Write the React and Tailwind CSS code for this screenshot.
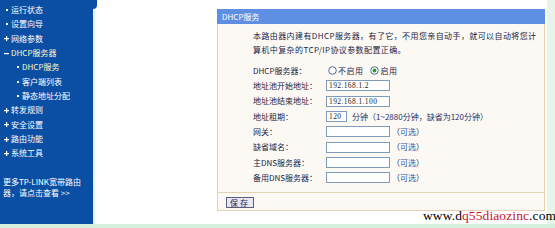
import React from "react";

const Dot = () => (
  <span className="w-[5px] flex items-center justify-center">
    <span className="w-[2px] h-[2px] bg-white" />
  </span>
);
const Plus = () => (
  <svg width="5" height="5" viewBox="0 0 5 5" className="shrink-0">
    <rect x="0" y="2" width="5" height="1.2" fill="#fff" />
    <rect x="2" y="0" width="1.2" height="5" fill="#fff" />
  </svg>
);
const Minus = () => (
  <svg width="5" height="5" viewBox="0 0 5 5" className="shrink-0">
    <rect x="0" y="2" width="5" height="1.2" fill="#fff" />
  </svg>
);

const NavItem = ({ icon, label, sub, hl }) => (
  <div className={`h-[14.33px] flex items-center ${sub ? "pl-[15px]" : "pl-[4px]"}`}>
    {icon}
    <span className={`ml-[2px] text-[8px] leading-none ${hl ? "text-[#fff8c8]" : "text-white"}`}>{label}</span>
  </div>
);

const Radio = ({ on }) => (
  <svg width="9" height="9" viewBox="0 0 9 9" className="shrink-0">
    <circle cx="4.5" cy="4.5" r="3.8" fill="#fff" stroke="#3a5f8c" strokeWidth="0.9" />
    {on && <circle cx="4.5" cy="4.5" r="1.9" fill="#2a9a2a" />}
  </svg>
);

const Box = ({ w = "w-[64px]", v }) => (
  <div className={`${w} h-[11px] border border-[#7f9db9] bg-white text-[7.5px] leading-[9px] pl-[2px] tracking-[0.4px] text-[#222] font-['Liberation_Serif',serif]`}>
    {v}
  </div>
);

const Row = ({ label, children }) => (
  <div className="h-[15.33px] flex items-center">
    <div className="w-[73px] text-[8px] leading-none">{label}</div>
    <div className="flex items-center">{children}</div>
  </div>
);

const Opt = () => (
  <span className="ml-[2px] text-[8px] leading-none text-[#1c2a50]">
    （<span className="text-[#2a56a8]">可选</span>）
  </span>
);

export default function App() {
  return (
    <div className="w-[555px] h-[228px] bg-white flex flex-col overflow-hidden relative font-['Noto_Sans_CJK_SC',sans-serif]">
      <div className="flex h-[224px]">
        <div className="w-[93px] bg-[#0b4fa5] relative pt-[3px]">
          <div className="absolute -right-[4px] top-0 w-[4px] h-[9px] bg-[#0b4fa5] rounded-br-full" />
          <NavItem icon={<Dot />} label="运行状态" />
          <NavItem icon={<Dot />} label="设置向导" />
          <NavItem icon={<Plus />} label="网络参数" />
          <NavItem icon={<Minus />} label="DHCP服务器" hl />
          <NavItem icon={<Dot />} label="DHCP服务" sub hl />
          <NavItem icon={<Dot />} label="客户端列表" sub />
          <NavItem icon={<Dot />} label="静态地址分配" sub />
          <NavItem icon={<Plus />} label="转发规则" />
          <NavItem icon={<Plus />} label="安全设置" />
          <NavItem icon={<Plus />} label="路由功能" />
          <NavItem icon={<Plus />} label="系统工具" />
          <div className="mt-[15px] pl-[3px] text-white text-[8px] leading-[11.7px]">
            <div>更多TP-LINK宽带路由</div>
            <div>器，请点击查看 &gt;&gt;</div>
          </div>
        </div>
        <div className="w-[2px] bg-[#e2f5f3]" />
        <div className="flex-1 flex">
          <div className="flex-1 pl-[122px] pt-[9px]">
            <div className="w-[328px] text-[#1a2444]">
              <div className="h-[15px] bg-[#5f8fe2] text-white text-[8px] leading-[15px] pl-[5px]">DHCP服务</div>
              <div className="h-[187px] border-x border-b border-[#e4d2b2] bg-[#fcf9f4] flex flex-col">
                <div className="pl-[35px] pt-[5px]">
                  <div className="text-[8px] leading-[14px] tracking-[0.4px]">本路由器内建有DHCP服务器，有了它，不用您亲自动手，就可以自动将您计</div>
                  <div className="text-[8px] leading-[14px] tracking-[0.4px]">算机中复杂的TCP/IP协议参数配置正确。</div>
                  <div className="mt-[6px]">
                    <Row label="DHCP服务器：">
                      <span className="ml-[2px]"><Radio /></span>
                      <span className="ml-[1px] text-[8px] leading-none tracking-[0.5px]">不启用</span>
                      <span className="ml-[6px]"><Radio on /></span>
                      <span className="ml-[2px] text-[8px] leading-none tracking-[0.5px]">启用</span>
                    </Row>
                    <Row label="地址池开始地址："><Box v="192.168.1.2" /></Row>
                    <Row label="地址池结束地址："><Box v="192.168.1.100" /></Row>
                    <Row label="地址租期：">
                      <Box w="w-[21px]" v="120" />
                      <span className="ml-[5px] text-[8px] leading-none text-[#22336a]">分钟（1~2880分钟，缺省为120分钟）</span>
                    </Row>
                    <Row label="网关："><Box /><Opt /></Row>
                    <Row label="缺省域名："><Box /><Opt /></Row>
                    <Row label="主DNS服务器："><Box /><Opt /></Row>
                    <Row label="备用DNS服务器："><Box /><Opt /></Row>
                  </div>
                </div>
                <div className="mt-[6px] border-t border-[#e4d2b2] flex-1 pl-[8px] pt-[4px]">
                  <div className="w-[28px] h-[11px] border border-[#5d5d80] bg-[#e6e6f6] text-[8px] leading-[9px] text-center text-[#1a2444] tracking-[2px]">保存</div>
                </div>
              </div>
            </div>
          </div>
          <div className="w-[8px] bg-[#e6f4ea]" />
        </div>
      </div>
      <div className="h-[4px] bg-[#d5f1de]" />
      <div className="absolute left-[423px] top-[209px] text-[13.5px] leading-none font-['Liberation_Serif',serif] text-black tracking-[0.1px]">
        www.d<span className="text-[#c8102e]">q55diaozinc</span>.com
      </div>
    </div>
  );
}
